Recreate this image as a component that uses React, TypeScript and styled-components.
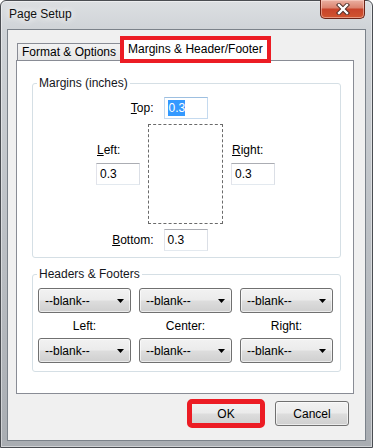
import React from 'react';
import styled, { createGlobalStyle } from 'styled-components';

const GlobalStyle = createGlobalStyle`
  html, body {
    margin: 0;
    padding: 0;
  }
  body {
    width: 373px;
    height: 448px;
    overflow: hidden;
    font-family: "Liberation Sans", Arial, sans-serif;
    font-size: 12px;
    color: #000;
  }
`;

const Window = styled.div`
  width: 373px;
  height: 448px;
  box-sizing: border-box;
  display: flex;
  flex-direction: column;
  border: 1px solid #4a4d52;
  border-radius: 6px 6px 0 0;
  background: linear-gradient(to bottom, #dcdfe2 0, #cfd3d7 30px, #b9bdc2 60%, #a9adb2 100%);
  box-shadow: inset 0 0 0 1px rgba(255, 255, 255, 0.45);
`;

const TitleBar = styled.div`
  height: 28px;
  display: flex;
  align-items: flex-start;
  justify-content: space-between;
`;

const Title = styled.span`
  padding: 6px 0 0 8px;
  font-size: 12px;
  line-height: 15px;
  color: #111;
  text-shadow: 0 0 6px rgba(255, 255, 255, 0.95), 0 0 10px rgba(255, 255, 255, 0.8);
`;

const CloseButton = styled.div`
  width: 45px;
  height: 19px;
  margin-right: 7px;
  margin-top: -1px;
  box-sizing: border-box;
  display: flex;
  align-items: center;
  justify-content: center;
  border: 1px solid #6b2418;
  border-top: none;
  border-radius: 0 0 5px 5px;
  background: linear-gradient(to bottom, #eab0a2 0%, #dc8571 42%, #c8442b 52%, #d0552f 100%);
  box-shadow: inset 0 0 0 1px rgba(255, 220, 210, 0.5);
`;

const Client = styled.div`
  flex: 1;
  margin: 0 6px 6px 6px;
  border: 1px solid #7b828a;
  background: #f0f0f0;
  display: flex;
  flex-direction: column;
  padding-top: 6px;
`;

const TabStrip = styled.div`
  height: 24px;
  display: flex;
  align-items: flex-end;
  padding-left: 8px;
`;

const Tab = styled.div<{ $active?: boolean }>`
  box-sizing: border-box;
  white-space: nowrap;
  line-height: 15px;
  ${p => p.$active ? `
    position: relative;
    z-index: 1;
    height: 27px;
    margin-bottom: -3px;
    padding: 2px 4px 0 4px;
    border: 4px solid #ec1c24;
    background: #fff;
  ` : `
    height: 17px;
    margin-left: 1px;
    padding: 1px 4px 0 4px;
    border: 1px solid #898c95;
    border-bottom: none;
    border-right: none;
    background: linear-gradient(to bottom, #f3f3f3, #e5e5e5);
  `}
`;

const Pane = styled.div`
  height: 334px;
  box-sizing: border-box;
  margin: 0 11px 0 8px;
  border: 1px solid #898c95;
  background: #fff;
  padding: 22px 12px 0 15px;
  display: flex;
  flex-direction: column;
  gap: 16px;
`;

const Group = styled.div`
  position: relative;
  border: 1px solid #d5dfe5;
  border-radius: 3px;
  box-shadow: inset 1px 1px 0 #fff;
`;

const Legend = styled.span`
  position: absolute;
  top: -8px;
  left: 4px;
  padding: 0 2px;
  line-height: 15px;
  background: #fff;
  color: #14161c;
`;

const MarginsBody = styled.div`
  padding: 13px 0 6px 0;
  display: flex;
  flex-direction: column;
  align-items: center;
  gap: 5px;
  padding-right: 2px;
`;

const MarginRow = styled.div`
  width: 179px;
  display: grid;
  grid-template-columns: 1fr 44px 1fr;
  align-items: center;
`;

const RowLabel = styled.span`
  justify-self: end;
  margin-right: 10px;
  line-height: 15px;
`;

const PageArea = styled.div`
  display: grid;
  grid-template-columns: 44px 75px 44px;
  column-gap: 8px;
`;

const SideColumn = styled.div`
  display: flex;
  flex-direction: column;
  gap: 5px;
  padding-top: 19px;
`;

const SideLabel = styled.span`
  line-height: 15px;
  padding-left: 1px;
`;

const PagePreview = styled.div`
  width: 75px;
  height: 100px;
  box-sizing: border-box;
  border: 1px dashed #6a6a6a;
`;

const TextBox = styled.div<{ $focused?: boolean }>`
  width: 44px;
  height: 22px;
  box-sizing: border-box;
  border: 1px solid;
  border-color: ${p => p.$focused ? '#9dbfe0 #c5daef #c5daef #c5daef' : '#abadb3 #dbdfe6 #e3e9ef #e2e3ea'};
  background: #fff;
  padding-left: 3px;
  display: flex;
  align-items: center;
  line-height: 16px;
`;

const Selection = styled.span`
  background: #3399ff;
  color: #fff;
  padding-left: 1px;
`;

const FooterGrid = styled.div`
  padding: 13px 6px 8px 5px;
  display: grid;
  grid-template-columns: repeat(3, 93px);
  grid-auto-rows: 25px;
  column-gap: 8px;
`;

const FooterLabel = styled.span`
  line-height: 25px;
  text-align: center;
  padding-top: 1px;
`;

const DropDown = styled.div`
  height: 25px;
  box-sizing: border-box;
  border: 1px solid #707070;
  border-radius: 3px;
  background: linear-gradient(to bottom, #f2f2f2 0%, #ebebeb 48%, #dddddd 52%, #cfcfcf 100%);
  box-shadow: inset 0 0 0 1px rgba(255, 255, 255, 0.6);
  display: flex;
  align-items: center;
  justify-content: space-between;
  padding: 0 6px 0 6px;
`;

const ButtonRow = styled.div`
  display: flex;
  justify-content: flex-end;
  gap: 12px;
  margin-top: 7px;
  padding-right: 16px;
`;

const PushButton = styled.div<{ $marked?: boolean }>`
  width: 74px;
  height: 25px;
  box-sizing: border-box;
  border: 1px solid #707070;
  border-radius: 3px;
  background: linear-gradient(to bottom, #f2f2f2 0%, #ebebeb 48%, #dddddd 52%, #cfcfcf 100%);
  box-shadow: inset 0 0 0 1px rgba(255, 255, 255, 0.6);
  display: flex;
  align-items: center;
  justify-content: center;
  ${p => p.$marked ? `
    outline: 5px solid #ec1c24;
    outline-offset: -3px;
  ` : ''}
`;

const Arrow = () => (
  <svg width="7" height="4" viewBox="0 0 7 4">
    <path d="M0 0H7L3.5 4Z" fill="#000" />
  </svg>
);

const CloseGlyph = () => (
  <svg width="14" height="12" viewBox="0 0 14 12">
    <path d="M3 2L11 10M11 2L3 10" stroke="#4a2a24" strokeWidth="4.2" strokeLinecap="square" />
    <path d="M3 2L11 10M11 2L3 10" stroke="#fff" strokeWidth="2.4" strokeLinecap="square" />
  </svg>
);

const Combo = () => (
  <DropDown>
    <span>--blank--</span>
    <Arrow />
  </DropDown>
);

export default function App() {
  return (
    <>
      <GlobalStyle />
      <Window>
        <TitleBar>
          <Title>Page Setup</Title>
          <CloseButton>
            <CloseGlyph />
          </CloseButton>
        </TitleBar>
        <Client>
          <TabStrip>
            <Tab>Format &amp; Options</Tab>
            <Tab $active>Margins &amp; Header/Footer</Tab>
          </TabStrip>
          <Pane>
            <Group>
              <Legend>Margins (inches)</Legend>
              <MarginsBody>
                <MarginRow>
                  <RowLabel><u>T</u>op:</RowLabel>
                  <TextBox $focused><Selection>0.3</Selection></TextBox>
                </MarginRow>
                <PageArea>
                  <SideColumn>
                    <SideLabel><u>L</u>eft:</SideLabel>
                    <TextBox>0.3</TextBox>
                  </SideColumn>
                  <PagePreview />
                  <SideColumn>
                    <SideLabel><u>R</u>ight:</SideLabel>
                    <TextBox>0.3</TextBox>
                  </SideColumn>
                </PageArea>
                <MarginRow>
                  <RowLabel><u>B</u>ottom:</RowLabel>
                  <TextBox>0.3</TextBox>
                </MarginRow>
              </MarginsBody>
            </Group>
            <Group>
              <Legend>Headers &amp; Footers</Legend>
              <FooterGrid>
                <Combo />
                <Combo />
                <Combo />
                <FooterLabel>Left:</FooterLabel>
                <FooterLabel>Center:</FooterLabel>
                <FooterLabel>Right:</FooterLabel>
                <Combo />
                <Combo />
                <Combo />
              </FooterGrid>
            </Group>
          </Pane>
          <ButtonRow>
            <PushButton $marked>OK</PushButton>
            <PushButton>Cancel</PushButton>
          </ButtonRow>
        </Client>
      </Window>
    </>
  );
}
